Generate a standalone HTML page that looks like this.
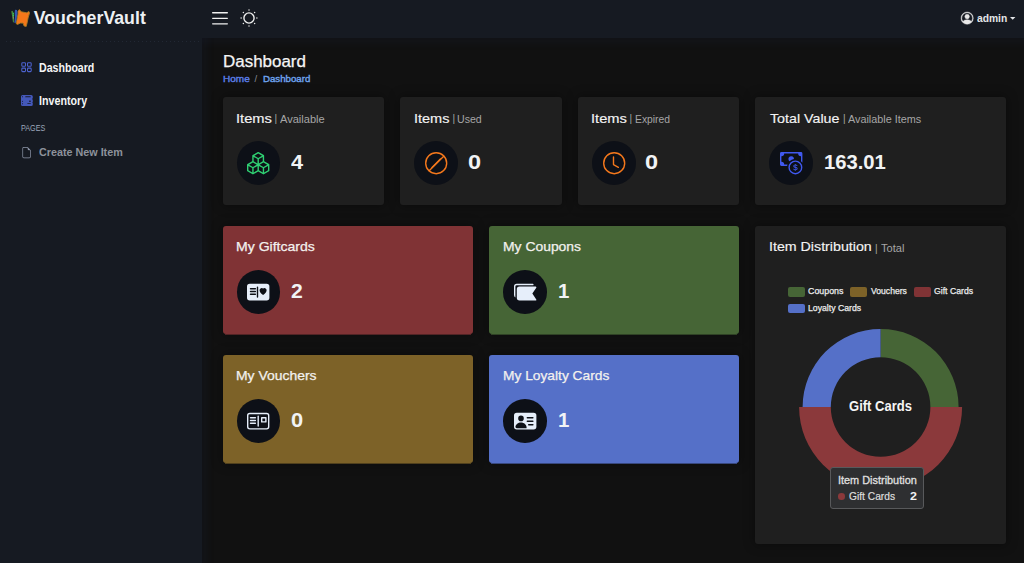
<!DOCTYPE html>
<html lang="en">
<head>
<meta charset="utf-8">
<title>VoucherVault - Dashboard</title>
<style>
*{box-sizing:border-box;margin:0;padding:0}
html,body{width:1024px;height:563px;overflow:hidden;background:#111111;font-family:"Liberation Sans",sans-serif;color:#fff}
#header{position:absolute;left:0;top:0;width:1024px;height:38px;background:#161a22}
#sidebar{position:absolute;left:0;top:0;width:202px;height:563px;background:#161a22}
#main{position:absolute;left:202px;top:38px;width:822px;height:525px;background:#111111;overflow:hidden}
#main i{position:absolute;display:block;box-shadow:0 0 7px 6px rgba(40,60,120,0.07)}
.t{position:absolute;white-space:nowrap;line-height:1;transform-origin:0 0}
.card{position:absolute;background:#1f1f1f;border-radius:3px;box-shadow:0 0 11px 1px rgba(0,0,0,0.36)}
.circ{position:absolute;width:43.6px;height:43.6px;border-radius:50%;background:#0d1017}
.bar{position:absolute;font-size:10px;line-height:1;color:#a6a6a6}
svg{position:absolute;overflow:visible}
</style>
</head>
<body>
<div id="main"><i style="left:-202px;top:-38px;width:1024px;height:38px"></i><i style="left:-202px;top:-38px;width:202px;height:563px"></i></div>
<div id="sidebar"></div>
<div id="header"></div>

<!-- ===== header ===== -->
<svg id="logo" style="left:0;top:0" width="40" height="38" viewBox="0 0 40 38">
  <polygon fill="#f4771a" stroke="#a87a22" stroke-width="0.9" stroke-linejoin="round" points="18,11.300 19.400,9.600 21.200,11.800 26.800,12.800 28.900,11.500 29.500,13 28.100,17.900 27.100,22.900 26.200,26.400 24.100,26 23.100,23.100 20.400,23.100 17.500,24.400 16.200,23.700 17,18.900 18,14"/>
  <polygon fill="#3458b2" points="15,9.800 17,10.100 17.500,13 16.600,18.900 15.700,22.900 14.300,22.700 15,16.900 14.700,13"/>
  <polygon fill="#4a8a3c" points="11.300,11.300 12.500,10.800 14.100,14 13.900,22.300 13,22.600 12.200,16.900"/>
  <circle cx="13.400" cy="13.300" r="0.600" fill="#27d36b"/><circle cx="13.400" cy="15.400" r="0.600" fill="#27d36b"/>
  <rect x="12.900" y="16.500" width="0.9" height="2.200" fill="#9a8f8a" opacity="0.8"/>
</svg>
<div class="t" style="left:33.7px;top:9.8px;font-size:17.75px;font-weight:700;color:#eef1f4;">VoucherVault</div>
<svg id="burger" style="left:212px;top:11.7px" width="16" height="13" viewBox="0 0 16 13"><g fill="#f0f0f0"><rect x="0" y="0.1" width="16" height="1.300" rx="0.650"/><rect x="0" y="5.700" width="16" height="1.300" rx="0.650"/><rect x="0" y="11.200" width="16" height="1.300" rx="0.650"/></g></svg>
<svg id="sun" style="left:238.8px;top:8px" width="20" height="20" viewBox="-10 -10 20 20"><circle r="5.100" fill="none" stroke="#efefef" stroke-width="1.400"/><g fill="#e4e4e4"><circle cx="7.9" cy="0" r="0.750"/><circle cx="-7.9" cy="0" r="0.750"/><circle cx="0" cy="7.9" r="0.750"/><circle cx="0" cy="-7.9" r="0.750"/><circle cx="5.600" cy="5.600" r="0.750"/><circle cx="-5.600" cy="5.600" r="0.750"/><circle cx="5.600" cy="-5.600" r="0.750"/><circle cx="-5.600" cy="-5.600" r="0.750"/></g></svg>
<svg id="person" style="left:960.8px;top:11.7px" width="12.3" height="12.3" viewBox="0 0 16 16" fill="#e8e8e8" stroke="#e8e8e8" stroke-width="0.5"><path d="M11 6a3 3 0 1 1-6 0 3 3 0 0 1 6 0"/><path fill-rule="evenodd" d="M0 8a8 8 0 1 1 16 0A8 8 0 0 1 0 8m8-7a7 7 0 0 0-5.468 11.37C3.242 11.226 4.805 10 8 10s4.757 1.225 5.468 2.37A7 7 0 0 0 8 1"/></svg>
<div class="t" style="left:977.3px;top:13.8px;font-size:10.0px;font-weight:700;transform:scaleX(1.026);color:#e4e6e9;">admin</div>
<svg id="caret" style="left:1010px;top:16.6px" width="5.4" height="2.8" viewBox="0 0 5.4 2.8"><polygon points="0,0 5.4,0 2.7,2.8" fill="#e4e6e9"/></svg>

<!-- ===== sidebar ===== -->
<div style="position:absolute;left:6px;top:41px;width:196px;height:1px;background:repeating-linear-gradient(90deg,#222834 0 1px,transparent 1px 4px)"></div>
<svg id="ic-grid" style="left:0;top:0" width="40" height="80" viewBox="0 0 40 80" fill="none" stroke="#4c62cf" stroke-width="1.05"><rect x="21.8" y="62.8" width="3.7" height="3.5" rx="0.8"/><rect x="27.5" y="62.8" width="3.7" height="3.5" rx="0.8"/><rect x="21.8" y="68.1" width="3.7" height="3.5" rx="0.8"/><rect x="27.5" y="68.1" width="3.7" height="3.5" rx="0.8"/></svg>
<div class="t" style="left:38.7px;top:61.7px;font-size:12.0px;font-weight:700;transform:scaleX(0.883);color:#f4f5f6;">Dashboard</div>
<svg id="ic-inv" style="left:0;top:0" width="40" height="110" viewBox="0 0 40 110"><path fill="#4458ba" d="M22.6 94.9h8.6a1.6 1.6 0 0 1 1.600 1.600v1.300a1.300 1.300 0 0 1-.8 1.200a1.300 1.300 0 0 1 .8 1.200v1.200a1.300 1.300 0 0 1-.5 1a1.300 1.300 0 0 1 .5 1v1.100a1.600 1.600 0 0 1-1.600 1.600h-8.600a1.600 1.600 0 0 1-1.600-1.600v-8a1.600 1.600 0 0 1 1.600-1.600z"/><g fill="#161a2a"><rect x="25.200" y="96.300" width="5.600" height="1" rx="0.4"/><circle cx="22.5" cy="96.800" r="0.550"/><circle cx="22.5" cy="101.300" r="0.550"/><circle cx="22.5" cy="103.700" r="0.550"/><rect x="29.100" y="100.400" width="1.700" height="1.500" rx="0.600"/><rect x="27.300" y="103.200" width="3.500" height="0.9" rx="0.4"/></g><g fill="#3f6f9a" opacity="0.6"><circle cx="23.400" cy="99.400" r="0.4"/><circle cx="25.400" cy="99.400" r="0.4"/><circle cx="27.300" cy="100.400" r="0.4"/><circle cx="25.400" cy="101.500" r="0.4"/><circle cx="25.400" cy="103.500" r="0.4"/></g></svg>
<div class="t" style="left:38.7px;top:95.4px;font-size:12.0px;font-weight:700;transform:scaleX(0.891);color:#f4f5f6;">Inventory</div>
<div class="t" style="left:20.6px;top:125.2px;font-size:8.25px;font-weight:400;transform:scaleX(0.873);color:#9ca7ba;">PAGES</div>
<svg id="ic-file" style="left:20.9px;top:147px" width="11.2" height="11.2" viewBox="0 0 16 16" fill="#8f98aa"><path d="M14 4.5V14a2 2 0 0 1-2 2H4a2 2 0 0 1-2-2V2a2 2 0 0 1 2-2h5.5zm-3 0A1.5 1.5 0 0 1 9.500 3V1H4a1 1 0 0 0-1 1v12a1 1 0 0 0 1 1h8a1 1 0 0 0 1-1V4.5z"/></svg>
<div class="t" style="left:38.8px;top:147.2px;font-size:11.25px;font-weight:700;transform:scaleX(0.957);color:#8d929b;">Create New Item</div>

<!-- ===== page title ===== -->
<div class="t" style="left:222.8px;top:54.0px;font-size:16.0px;font-weight:400;transform:scaleX(1.059);color:#f5f5f5;-webkit-text-stroke:0.25px #f5f5f5">Dashboard</div>
<div class="t" style="left:223.1px;top:74.3px;font-size:9.5px;font-weight:400;transform:scaleX(1.054);color:#5b7fe9;-webkit-text-stroke:0.4px #5b7fe9">Home</div>
<div class="t" style="left:254.5px;top:74.2px;font-size:9.5px;color:#8a8f99">/</div>
<div class="t" style="left:263.2px;top:74.3px;font-size:9.5px;font-weight:400;transform:scaleX(1.017);color:#6ea3ee;-webkit-text-stroke:0.4px #6ea3ee">Dashboard</div>

<!-- ===== stat cards ===== -->
<div class="card" style="left:223px;top:97px;width:161px;height:108px"></div>
<div class="card" style="left:400.4px;top:97px;width:161.6px;height:108px"></div>
<div class="card" style="left:578.2px;top:97px;width:160.8px;height:108px"></div>
<div class="card" style="left:755.2px;top:97px;width:250.4px;height:108px"></div>

<div class="t" style="left:235.8px;top:112.5px;font-size:12.75px;font-weight:400;transform:scaleX(1.151);color:#f3f3f3;-webkit-text-stroke:0.15px #f3f3f3">Items</div><div class="bar" style="left:274.5px;top:114.2px">|</div><div class="t" style="left:280.0px;top:114.9px;font-size:10.0px;font-weight:400;transform:scaleX(1.105);color:#a6a6a6;">Available</div>
<div class="t" style="left:413.5px;top:112.5px;font-size:12.75px;font-weight:400;transform:scaleX(1.137);color:#f3f3f3;-webkit-text-stroke:0.15px #f3f3f3">Items</div><div class="bar" style="left:452.4px;top:114.2px">|</div><div class="t" style="left:456.9px;top:114.9px;font-size:10.0px;font-weight:400;transform:scaleX(1.059);color:#a6a6a6;">Used</div>
<div class="t" style="left:590.8px;top:112.5px;font-size:12.75px;font-weight:400;transform:scaleX(1.151);color:#f3f3f3;-webkit-text-stroke:0.15px #f3f3f3">Items</div><div class="bar" style="left:629.6px;top:114.2px">|</div><div class="t" style="left:634.5px;top:114.9px;font-size:10.0px;font-weight:400;transform:scaleX(1.034);color:#a6a6a6;">Expired</div>
<div class="t" style="left:769.9px;top:112.5px;font-size:12.75px;font-weight:400;transform:scaleX(1.117);color:#f3f3f3;-webkit-text-stroke:0.15px #f3f3f3">Total Value</div><div class="bar" style="left:843.1px;top:114.2px">|</div><div class="t" style="left:847.7px;top:114.9px;font-size:10.0px;font-weight:400;transform:scaleX(1.082);color:#a6a6a6;">Available Items</div>

<div class="circ" style="left:236.6px;top:141px"></div>
<div class="circ" style="left:414.3px;top:141px"></div>
<div class="circ" style="left:592px;top:141px"></div>
<div class="circ" style="left:769.2px;top:141px"></div>

<svg id="ic-boxes" style="left:247px;top:151.700px" width="22.4" height="22.4" viewBox="0 0 16 16" fill="#2fcf72"><path d="M7.752.066a.5.5 0 0 1 .496 0l3.750 2.143a.5.5 0 0 1 .252.434v3.995l3.498 2A.5.5 0 0 1 16 9.070v4.286a.5.5 0 0 1-.252.434l-3.750 2.143a.5.5 0 0 1-.496 0l-3.502-2-3.502 2.001a.5.5 0 0 1-.496 0l-3.750-2.143A.5.5 0 0 1 0 13.357V9.071a.5.5 0 0 1 .252-.434L3.750 6.638V2.643a.5.5 0 0 1 .252-.434zM4.250 7.504 1.508 9.071l2.742 1.567 2.742-1.567zM7.500 9.933l-2.750 1.571v3.134l2.750-1.571zm1 3.134 2.750 1.571v-3.134L8.500 9.933zm.508-3.996 2.742 1.567 2.742-1.567-2.742-1.567zm2.242-2.433V3.504L8.500 5.076V8.210zM7.500 8.210V5.076L4.750 3.504v3.134zM5.258 2.643 8 4.210l2.742-1.567L8 1.076zM15 9.933l-2.750 1.571v3.134L15 13.067zM3.750 14.638v-3.134L1 9.933v3.134z"/></svg>
<svg id="ic-slash" style="left:424.9px;top:151.700px" width="22.4" height="22.4" viewBox="0 0 16 16" fill="#f4781c"><path d="M8 15A7 7 0 1 1 8 1a7 7 0 0 1 0 14m0 1A8 8 0 1 0 8 0a8 8 0 0 0 0 16"/><path d="M11.354 4.646a.5.5 0 0 0-.708 0l-6 6a.5.5 0 0 0 .708.708l6-6a.5.5 0 0 0 0-.708"/><path d="M13.4 2.250 2.250 13.400l.7.7L14.100 2.950z"/></svg>
<svg id="ic-clock" style="left:602.7px;top:151.700px" width="22.4" height="22.4" viewBox="0 0 16 16" fill="#f4781c"><path d="M8 3.500a.5.5 0 0 0-1 0V9a.5.5 0 0 0 .252.434l3.500 2a.5.5 0 0 0 .496-.868L8 8.710z"/><path d="M8 16A8 8 0 1 0 8 0a8 8 0 0 0 0 16m7-8A7 7 0 1 1 1 8a7 7 0 0 1 14 0"/></svg>
<svg id="ic-cash" style="left:779.900px;top:151.700px" width="22.4" height="22.4" viewBox="0 0 16 16" fill="#4059f0"><path fill-rule="evenodd" d="M11 15a4 4 0 1 0 0-8 4 4 0 0 0 0 8m5-4a5 5 0 1 1-10 0 5 5 0 0 1 10 0"/><path d="M9.438 11.944c.047.596.518 1.060 1.363 1.116v.440h.375v-.443c.875-.061 1.386-.529 1.386-1.207 0-.618-.390-.936-1.090-1.100l-.296-.070v-1.200c.376.043.614.248.671.532h.658c-.047-.575-.540-1.024-1.329-1.073V8.500h-.375v.450c-.747.073-1.255.522-1.255 1.158 0 .562.378.920 1.007 1.066l.248.061v1.272c-.384-.058-.639-.270-.696-.563h-.668zm1.360-1.354c-.369-.085-.569-.260-.569-.522 0-.294.216-.514.572-.578v1.100zm.432.746c.449.104.655.272.655.569 0 .339-.257.571-.709.614v-1.195z"/><path d="M1 0a1 1 0 0 0-1 1v8a1 1 0 0 0 1 1h4.083q.088-.517.258-1H3a2 2 0 0 0-2-2V3a2 2 0 0 0 2-2h10a2 2 0 0 0 2 2v3.528c.380.340.717.728 1 1.154V1a1 1 0 0 0-1-1z"/><path d="M9.998 5.083 10 5a2 2 0 1 0-3.132 1.650 6 6 0 0 1 3.130-1.567"/></svg>

<div class="t" style="left:291.0px;top:152.1px;font-size:20.25px;font-weight:700;transform:scaleX(1.07);color:#f1f3f5;">4</div><div class="t" style="left:467.9px;top:152.1px;font-size:20.25px;font-weight:700;transform:scaleX(1.159);color:#f1f3f5;">0</div><div class="t" style="left:645.4px;top:152.1px;font-size:20.25px;font-weight:700;transform:scaleX(1.159);color:#f1f3f5;">0</div><div class="t" style="left:823.9px;top:152.1px;font-size:20.25px;font-weight:700;color:#f1f3f5;">163.01</div>

<!-- ===== category cards ===== -->
<div class="card" style="left:223px;top:226px;width:250px;height:108px;background:#803335"></div>
<div class="card" style="left:489.4px;top:226px;width:249.600px;height:108px;background:#466536"></div>
<div class="card" style="left:223px;top:355px;width:250px;height:108px;background:#7d6228"></div>
<div class="card" style="left:489.4px;top:355px;width:249.600px;height:108px;background:#5570c8"></div>

<div style="position:absolute;left:225px;top:334px;width:246px;height:1px;background:#803335;opacity:0.6"></div>
<div style="position:absolute;left:491.4px;top:334px;width:245.6px;height:1px;background:#466536;opacity:0.6"></div>
<div style="position:absolute;left:225px;top:463px;width:246px;height:1px;background:#7d6228;opacity:0.6"></div>
<div style="position:absolute;left:491.4px;top:463px;width:245.6px;height:1px;background:#5570c8;opacity:0.6"></div>
<div class="t" style="left:235.8px;top:240.0px;font-size:13.0px;font-weight:400;transform:scaleX(1.081);color:#f3f1ee;-webkit-text-stroke:0.25px #f3f1ee">My Giftcards</div><div class="t" style="left:502.5px;top:240.0px;font-size:13.0px;font-weight:400;transform:scaleX(1.069);color:#f3f1ee;-webkit-text-stroke:0.25px #f3f1ee">My Coupons</div><div class="t" style="left:235.8px;top:369.0px;font-size:13.0px;font-weight:400;transform:scaleX(1.072);color:#f3f1ee;-webkit-text-stroke:0.25px #f3f1ee">My Vouchers</div><div class="t" style="left:502.5px;top:369.0px;font-size:13.0px;font-weight:400;transform:scaleX(1.059);color:#f3f1ee;-webkit-text-stroke:0.25px #f3f1ee">My Loyalty Cards</div>

<div class="circ" style="left:236.5px;top:270.100px"></div>
<div class="circ" style="left:503.4px;top:270.100px"></div>
<div class="circ" style="left:236.5px;top:399.100px"></div>
<div class="circ" style="left:503.4px;top:399.100px"></div>

<svg id="ic-gift" style="left:247.200px;top:280.700px" width="22.4" height="22.4" viewBox="0 0 16 16" fill="#e6eefa"><path fill-rule="evenodd" d="M2 2a2 2 0 0 0-2 2v8a2 2 0 0 0 2 2h12a2 2 0 0 0 2-2V4a2 2 0 0 0-2-2zm6 2.500a.5.5 0 0 0-1 0v7a.5.5 0 0 0 1 0zm3.500.878c1.482-1.420 4.795 1.392 0 4.622-4.795-3.230-1.482-6.043 0-4.622M2 5.500a.5.5 0 0 1 .5-.5H6a.5.5 0 0 1 0 1H2.500a.5.5 0 0 1-.5-.5m0 2a.5.5 0 0 1 .5-.5H6a.5.5 0 0 1 0 1H2.500a.5.5 0 0 1-.5-.5m0 2a.5.5 0 0 1 .5-.5H6a.5.5 0 0 1 0 1H2.500a.5.5 0 0 1-.5-.5"/></svg>
<svg id="ic-coupon" style="left:514.100px;top:280.700px" width="22.4" height="22.4" viewBox="0 0 16 16" fill="#e6eefa"><g transform="rotate(-90 8 8)"><path d="M2 4a2 2 0 0 1 2-2h6a2 2 0 0 1 2 2v11.500a.5.5 0 0 1-.777.416L7 13.101l-4.223 2.815A.5.5 0 0 1 2 15.500z"/><path d="M4.268 1A2 2 0 0 1 6 0h6a2 2 0 0 1 2 2v11.500a.5.5 0 0 1-.777.416L13 13.768V2a1 1 0 0 0-1-1z"/></g></svg>
<svg id="ic-voucher" style="left:247.200px;top:409.700px" width="22.4" height="22.4" viewBox="0 0 16 16" fill="#e6eefa"><path fill-rule="evenodd" d="M2 2a2 2 0 0 0-2 2v8a2 2 0 0 0 2 2h12a2 2 0 0 0 2-2V4a2 2 0 0 0-2-2zM1 4a1 1 0 0 1 1-1h12a1 1 0 0 1 1 1v8a1 1 0 0 1-1 1H2a1 1 0 0 1-1-1zm7.500.5a.5.5 0 0 0-1 0v7a.5.5 0 0 0 1 0zM2 5.500a.5.5 0 0 1 .5-.5H6a.5.5 0 0 1 0 1H2.500a.5.5 0 0 1-.5-.5m0 2a.5.5 0 0 1 .5-.5H6a.5.5 0 0 1 0 1H2.500a.5.5 0 0 1-.5-.5m0 2a.5.5 0 0 1 .5-.5H6a.5.5 0 0 1 0 1H2.500a.5.5 0 0 1-.5-.5M10.500 5a.5.5 0 0 0-.5.5v3a.5.5 0 0 0 .5.5h3a.5.5 0 0 0 .5-.5v-3a.5.5 0 0 0-.5-.5zM13 8h-2V6h2z"/></svg>
<svg id="ic-loyal" style="left:514.100px;top:409.700px" width="22.4" height="22.4" viewBox="0 0 16 16" fill="#e6eefa"><path d="M0 4a2 2 0 0 1 2-2h12a2 2 0 0 1 2 2v8a2 2 0 0 1-2 2H2a2 2 0 0 1-2-2zm9 1.500a.5.5 0 0 0 .5.5h4a.5.5 0 0 0 0-1h-4a.5.5 0 0 0-.5.5M9 8a.5.5 0 0 0 .5.5h4a.5.5 0 0 0 0-1h-4A.5.5 0 0 0 9 8m1 2.500a.5.5 0 0 0 .5.5h3a.5.5 0 0 0 0-1h-3a.5.5 0 0 0-.5.5m-1 2C9 10.567 7.210 9 5 9c-2.086 0-3.800 1.398-3.984 3.181A1 1 0 0 0 2 13h6.960q.040-.245.040-.5M7 6a2 2 0 1 0-4 0 2 2 0 0 0 4 0"/></svg>

<div class="t" style="left:291.1px;top:280.8px;font-size:20.25px;font-weight:700;transform:scaleX(1.045);color:#f1f3f5;">2</div><div class="t" style="left:557.5px;top:280.8px;font-size:20.25px;font-weight:700;transform:scaleX(1.009);color:#f1f3f5;">1</div><div class="t" style="left:290.9px;top:410.0px;font-size:20.0px;font-weight:700;transform:scaleX(1.093);color:#f1f3f5;">0</div><div class="t" style="left:557.5px;top:409.8px;font-size:20.25px;font-weight:700;transform:scaleX(1.009);color:#f1f3f5;">1</div>

<!-- ===== distribution card ===== -->
<div class="card" style="left:755.2px;top:226px;width:250.4px;height:318px"></div>
<div class="t" style="left:768.9px;top:241.3px;font-size:12.75px;font-weight:400;transform:scaleX(1.115);color:#f3f3f3;-webkit-text-stroke:0.15px #f3f3f3">Item Distribution</div><div class="bar" style="left:875px;top:243.5px">|</div><div class="t" style="left:880.8px;top:243.5px;font-size:10.0px;font-weight:400;transform:scaleX(1.107);color:#a6a6a6;">Total</div>

<div style="position:absolute;left:787.8px;top:287.400px;width:17.2px;height:9.4px;border-radius:2px;background:#466536"></div>
<div class="t" style="left:807.9px;top:286.9px;font-size:9.0px;font-weight:400;transform:scaleX(0.984);color:#ececec;-webkit-text-stroke:0.25px #ececec">Coupons</div>
<div style="position:absolute;left:850.3px;top:287.400px;width:16.8px;height:9.4px;border-radius:2px;background:#7d6228"></div>
<div class="t" style="left:870.8px;top:286.9px;font-size:9.0px;font-weight:400;transform:scaleX(0.956);color:#ececec;-webkit-text-stroke:0.25px #ececec">Vouchers</div>
<div style="position:absolute;left:913.8px;top:287.400px;width:17px;height:9.4px;border-radius:2px;background:#803335"></div>
<div class="t" style="left:933.9px;top:286.9px;font-size:9.0px;font-weight:400;transform:scaleX(0.966);color:#ececec;-webkit-text-stroke:0.25px #ececec">Gift Cards</div>
<div style="position:absolute;left:787.8px;top:303.800px;width:17.2px;height:9.4px;border-radius:2px;background:#5570c8"></div>
<div class="t" style="left:807.8px;top:303.8px;font-size:9.0px;font-weight:400;transform:scaleX(0.967);color:#ececec;-webkit-text-stroke:0.25px #ececec">Loyalty Cards</div>

<svg id="donut" style="left:780px;top:320px" width="200" height="180" viewBox="780 320 200 180">
  <!-- center 880.6,407 R=78 r=49.8 -->
  <path fill="#466536" d="M880.6 329 A78 78 0 0 1 958.6 407 L930.4 407 A49.8 49.8 0 0 0 880.6 357.2 Z"/>
  <path fill="#5570c8" d="M802.6 407 A78 78 0 0 1 880.6 329 L880.6 357.2 A49.8 49.8 0 0 0 830.8 407 Z"/>
  <path fill="#8b393b" d="M962.1 407 A81.500 81.500 0 0 1 799.1 407 L830.8 407 A49.8 49.8 0 0 0 930.4 407 Z"/>
</svg>
<div class="t" style="left:849.0px;top:399.6px;font-size:13.75px;font-weight:700;transform:scaleX(0.948);color:#f5f5f5;">Gift Cards</div>

<div id="tip" style="position:absolute;left:830px;top:467px;width:94px;height:42px;background:#2e2f31;border:1px solid #58595b;border-radius:3px"></div>
<div class="t" style="left:837.7px;top:474.8px;font-size:10.75px;font-weight:400;transform:scaleX(1.014);color:#dedede;-webkit-text-stroke:0.35px #dedede">Item Distribution</div>
<div style="position:absolute;left:838.200px;top:493.200px;width:6.6px;height:6.6px;border-radius:50%;background:#8b393b"></div>
<div class="t" style="left:848.9px;top:491.3px;font-size:10.5px;font-weight:400;transform:scaleX(0.974);color:#dedede;-webkit-text-stroke:0.2px #dedede">Gift Cards</div><div class="t" style="left:909.9px;top:491.1px;font-size:10.5px;font-weight:700;transform:scaleX(1.187);color:#f2f2f2;">2</div>

</body>
</html>
